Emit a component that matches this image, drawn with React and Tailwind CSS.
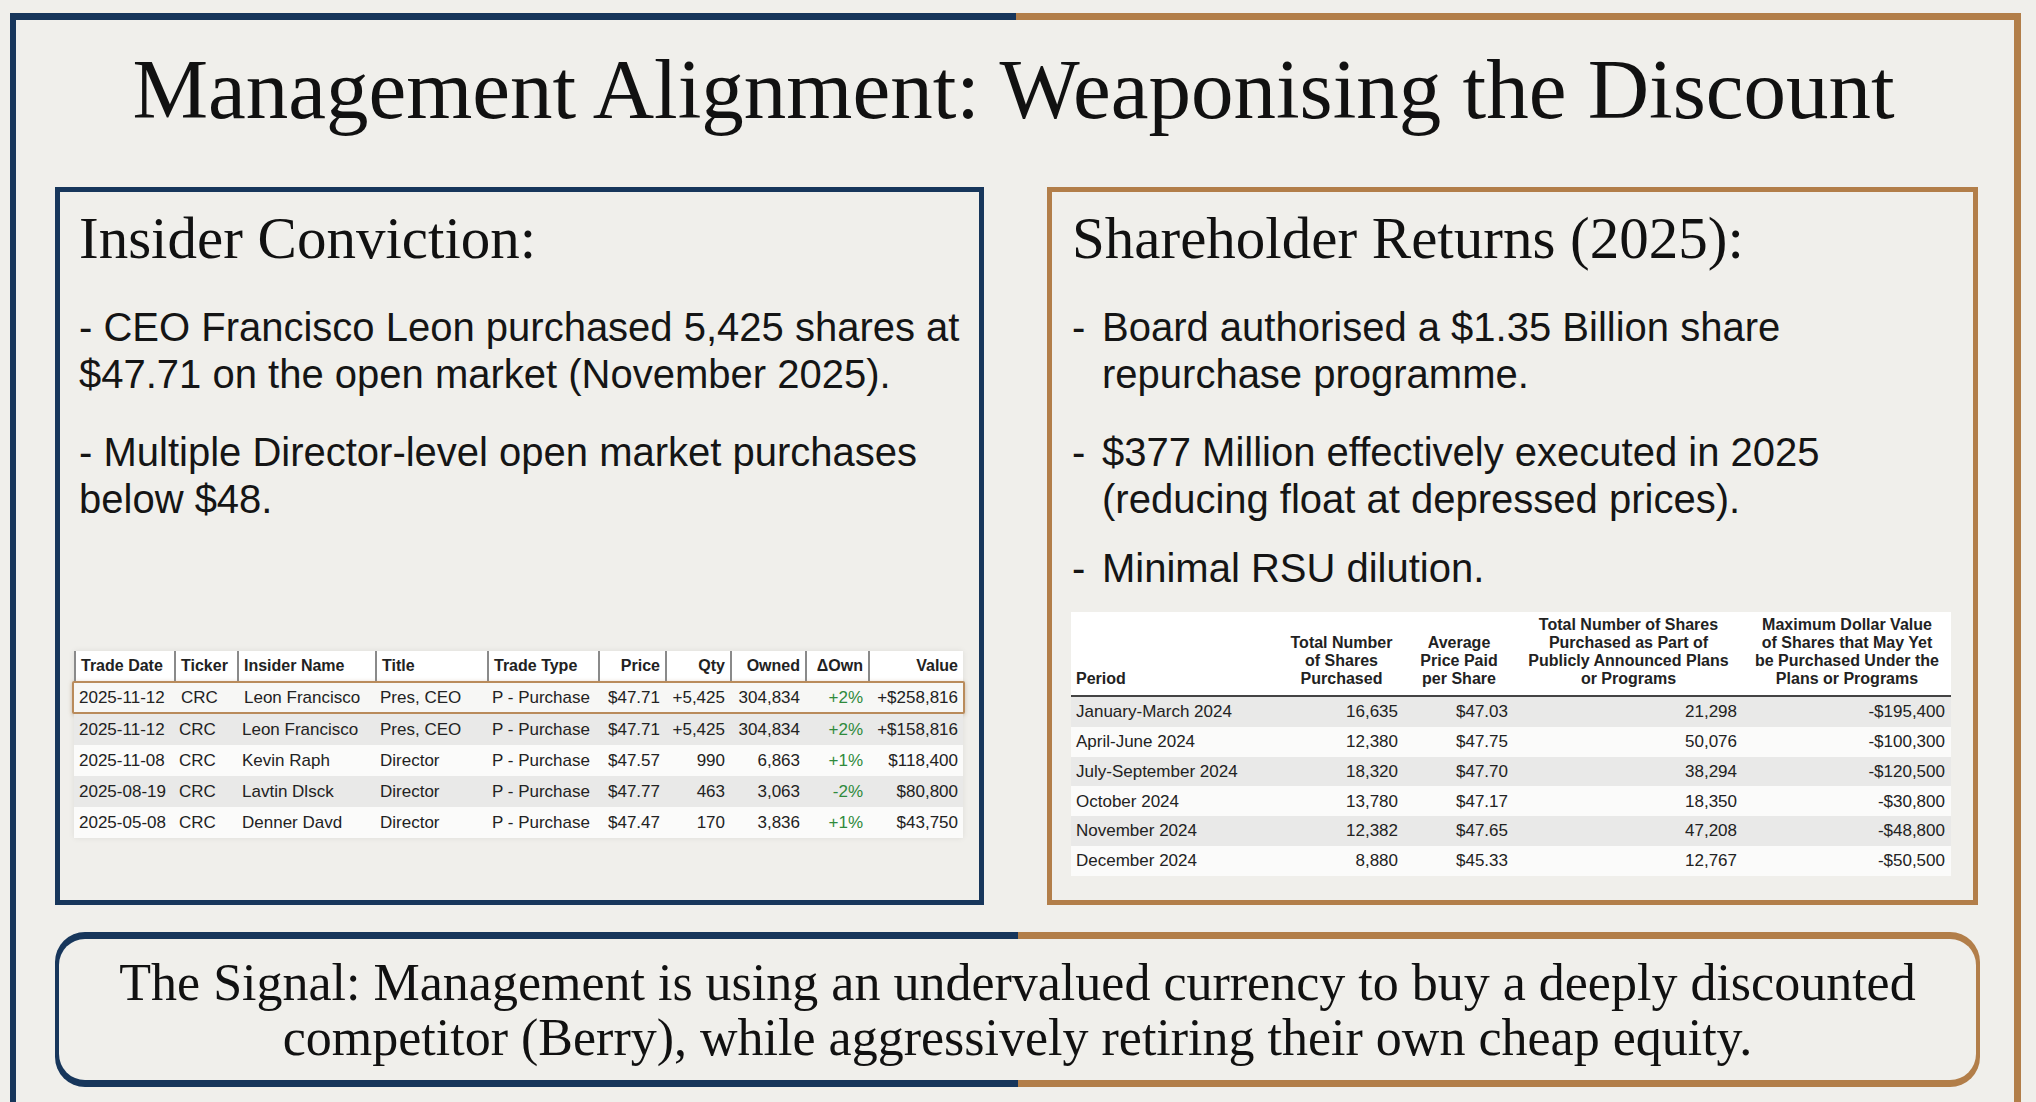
import React from 'react';

const serif = "font-['Liberation_Serif','DejaVu_Serif',serif]";
const sans = "font-['Liberation_Sans',Arial,sans-serif]";

const trades = [
  { date: '2025-11-12', ticker: 'CRC', name: 'Leon Francisco', title: 'Pres, CEO', type: 'P - Purchase', price: '$47.71', qty: '+5,425', owned: '304,834', own: '+2%', value: '+$258,816' },
  { date: '2025-11-12', ticker: 'CRC', name: 'Leon Francisco', title: 'Pres, CEO', type: 'P - Purchase', price: '$47.71', qty: '+5,425', owned: '304,834', own: '+2%', value: '+$158,816' },
  { date: '2025-11-08', ticker: 'CRC', name: 'Kevin Raph', title: 'Director', type: 'P - Purchase', price: '$47.57', qty: '990', owned: '6,863', own: '+1%', value: '$118,400' },
  { date: '2025-08-19', ticker: 'CRC', name: 'Lavtin Dlsck', title: 'Director', type: 'P - Purchase', price: '$47.77', qty: '463', owned: '3,063', own: '-2%', value: '$80,800' },
  { date: '2025-05-08', ticker: 'CRC', name: 'Denner Davd', title: 'Director', type: 'P - Purchase', price: '$47.47', qty: '170', owned: '3,836', own: '+1%', value: '$43,750' }
];

const buybacks = [
  { period: 'January-March 2024', total: '16,635', avg: '$47.03', plan: '21,298', max: '-$195,400' },
  { period: 'April-June 2024', total: '12,380', avg: '$47.75', plan: '50,076', max: '-$100,300' },
  { period: 'July-September 2024', total: '18,320', avg: '$47.70', plan: '38,294', max: '-$120,500' },
  { period: 'October 2024', total: '13,780', avg: '$47.17', plan: '18,350', max: '-$30,800' },
  { period: 'November 2024', total: '12,382', avg: '$47.65', plan: '47,208', max: '-$48,800' },
  { period: 'December 2024', total: '8,880', avg: '$45.33', plan: '12,767', max: '-$50,500' }
];

const tradeCols = 'grid grid-cols-[100px_63px_138px_112px_111px_67px_65px_75px_63px_95px]';
const buyCols = 'grid grid-cols-[208px_125px_110px_229px_208px]';

const InsiderTable = () => {
  const headers = [
    ['Trade Date', 'text-left'],
    ['Ticker', 'text-left'],
    ['Insider Name', 'text-left'],
    ['Title', 'text-left'],
    ['Trade Type', 'text-left'],
    ['Price', 'text-right'],
    ['Qty', 'text-right'],
    ['Owned', 'text-right'],
    ['ΔOwn', 'text-right'],
    ['Value', 'text-right']
  ];

  return (
    <div className={`${sans} w-[889px] ml-[14px] mt-[128px] text-[#222] shadow-[0_0_6px_rgba(0,0,0,0.08)]`}>
      <div className={`${tradeCols} bg-white h-[30px] items-center text-[16px] font-bold`}>
        {headers.map(([label, align]) => (
          <div
            key={label}
            className={`${align} h-full flex items-center px-[5px] border-l-2 border-[#8a8a8a] ${align === 'text-right' ? 'justify-end' : ''}`}
          >
            {label}
          </div>
        ))}
      </div>
      {trades.map((t, i) => {
        const highlight = i === 0;
        const bg = highlight ? 'bg-[#f7f7f5]' : i % 2 === 1 ? 'bg-[#e9e9e8]' : 'bg-[#fbfbfa]';
        return (
          <div
            key={i}
            className={`${tradeCols} ${bg} items-center text-[17px] ${highlight ? 'h-[33px] border-[2px] border-[#b98b5b] rounded-[2px] shadow-[0_1px_4px_rgba(150,100,50,0.35)] -mx-[2px] w-[893px] grid-cols-[102px_63px_136px_112px_111px_67px_65px_75px_63px_95px]' : 'h-[31px]'}`}
          >
            <div className="px-[5px]">{t.date}</div>
            <div className="px-[5px]">{t.ticker}</div>
            <div className="px-[5px]">{t.name}</div>
            <div className="px-[5px]">{t.title}</div>
            <div className="px-[5px]">{t.type}</div>
            <div className="px-[5px] text-right">{t.price}</div>
            <div className="px-[5px] text-right">{t.qty}</div>
            <div className="px-[5px] text-right">{t.owned}</div>
            <div className="px-[5px] text-right text-[#2f8a3c]">{t.own}</div>
            <div className="px-[5px] text-right">{t.value}</div>
          </div>
        );
      })}
    </div>
  );
};

const BuybackTable = () => (
  <div className={`${sans} w-[880px] ml-[19px] mt-[20px] text-[#222]`}>
    <div className={`${buyCols} bg-white h-[85px] items-end pb-[7px] text-[16px] leading-[18px] font-bold border-b-2 border-[#444]`}>
      <div className="px-[5px] text-left">Period</div>
      <div className="text-center">Total Number<br />of Shares<br />Purchased</div>
      <div className="text-center">Average<br />Price Paid<br />per Share</div>
      <div className="text-center">Total Number of Shares<br />Purchased as Part of<br />Publicly Announced Plans<br />or Programs</div>
      <div className="text-center">Maximum Dollar Value<br />of Shares that May Yet<br />be Purchased Under the<br />Plans or Programs</div>
    </div>
    {buybacks.map((b, i) => (
      <div
        key={b.period}
        className={`${buyCols} h-[29.8px] items-center text-[17px] ${i % 2 === 0 ? 'bg-[#e9e9e8]' : 'bg-[#fbfbfa]'}`}
      >
        <div className="px-[5px]">{b.period}</div>
        <div className="px-[6px] text-right">{b.total}</div>
        <div className="px-[6px] text-right">{b.avg}</div>
        <div className="px-[6px] text-right">{b.plan}</div>
        <div className="px-[6px] text-right">{b.max}</div>
      </div>
    ))}
  </div>
);

const Bullet = ({ children, className = '' }) => (
  <div className={`flex ${className}`}>
    <span className="w-[30px] shrink-0">-</span>
    <span>{children}</span>
  </div>
);

export default function App() {
  return (
    <div className="w-[2036px] h-[1102px] overflow-hidden bg-[#f0efeb] pt-[13px] pl-[10px]">
      <div className="w-[2011px] h-[1110px] bg-[linear-gradient(to_right,#17365b_50%,#b27e49_50%)] pt-[7px] pl-[6px] pr-[7px]">
        <div className="h-full bg-[#f0efeb] pl-[39px] pr-[34px] pt-[27px]">
          <h1 className={`${serif} text-[85px] leading-[85px] text-center text-[#111] pr-[8px]`}>
            Management Alignment: Weaponising the Discount
          </h1>

          <div className="flex gap-[63px] mt-[55px]">
            {/* left panel */}
            <div className="w-[929px] h-[718px] border-[5px] border-[#17365b] pt-[17px]">
              <h2 className={`${serif} text-[59px] leading-[59px] text-[#111] pl-[19px]`}>Insider Conviction:</h2>
              <div className={`${sans} text-[40px] leading-[47px] text-[#151515] pl-[19px] pr-[6px] mt-[36px]`}>
                <p>- CEO Francisco Leon purchased 5,425 shares at $47.71 on the open market (November 2025).</p>
                <p className="mt-[31px]">- Multiple Director-level open market purchases below $48.</p>
              </div>
              <InsiderTable />
            </div>

            {/* right panel */}
            <div className="w-[931px] h-[718px] border-[5px] border-[#b27e49] pt-[17px]">
              <h2 className={`${serif} text-[59px] leading-[59px] text-[#111] pl-[20px]`}>Shareholder Returns (2025):</h2>
              <div className={`${sans} text-[40px] leading-[47px] text-[#151515] pl-[20px] pr-[10px] mt-[36px]`}>
                <Bullet>Board authorised a $1.35 Billion share repurchase programme.</Bullet>
                <Bullet className="mt-[31px]">$377 Million effectively executed in 2025 (reducing float at depressed prices).</Bullet>
                <Bullet className="mt-[22px]">Minimal RSU dilution.</Bullet>
              </div>
              <BuybackTable />
            </div>
          </div>

          {/* signal box */}
          <div className="mt-[27px] w-[1925px] h-[155px] rounded-[30px] bg-[linear-gradient(to_right,#17365b_50%,#b27e49_50%)] py-[7px] px-[4px]">
            <div className="h-full rounded-[26px] bg-[#f0efeb] flex items-center justify-center">
              <p className={`${serif} text-[52px] leading-[55px] text-center text-[#111]`}>
                The Signal: Management is using an undervalued currency to buy a deeply discounted
                <br />
                competitor (Berry), while aggressively retiring their own cheap equity.
              </p>
            </div>
          </div>
        </div>
      </div>
    </div>
  );
}
